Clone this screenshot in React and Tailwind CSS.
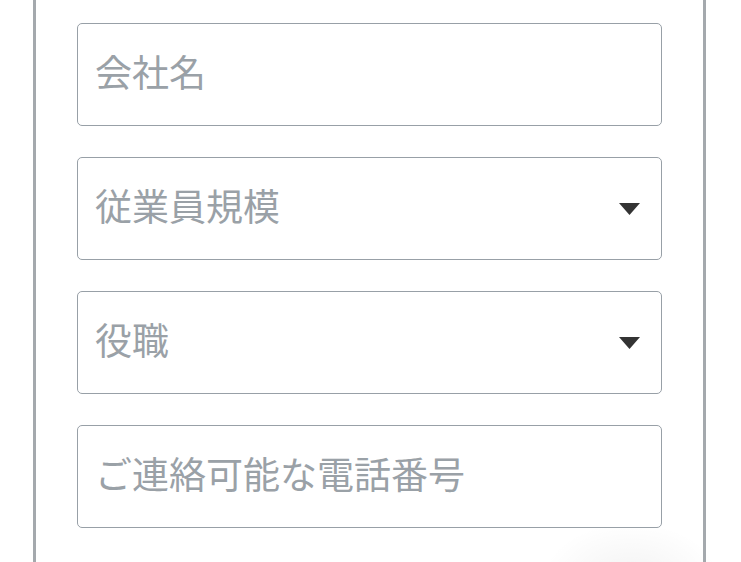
import React from "react";

function Caret() {
  return (
    <svg width="21" height="12" viewBox="0 0 21 12" className="shrink-0">
      <polygon points="0,0 21,0 10.5,12" fill="#333333" />
    </svg>
  );
}

function Field({ label, select }) {
  return (
    <div className="h-[103px] rounded-[5px] border-[1.5px] border-[#98a0a7] bg-white flex items-center pl-[17px] pr-[21px]">
      <span className="flex-1 text-[37px] leading-none text-[#9aa1a7] relative top-[-3px]">
        {label}
      </span>
      {select && <Caret />}
    </div>
  );
}

export default function App() {
  return (
    <div
      className="w-[741px] h-[562px] bg-white overflow-hidden relative"
      style={{ fontFamily: '"Noto Sans CJK JP", "Noto Sans", sans-serif' }}
    >
      <div className="absolute right-[20px] bottom-[-80px] w-[180px] h-[120px] rounded-full bg-[radial-gradient(closest-side,rgba(0,0,0,0.05),rgba(0,0,0,0))]" />
      <div className="relative ml-[33px] w-[673px] h-full border-x-[3px] border-[#a4a9ad] pt-[23px] pl-[41px] pr-[41px]">
        <div className="flex flex-col gap-[31px]">
          <Field label="会社名" />
          <Field label="従業員規模" select />
          <Field label="役職" select />
          <Field label="ご連絡可能な電話番号" />
        </div>
      </div>
    </div>
  );
}
